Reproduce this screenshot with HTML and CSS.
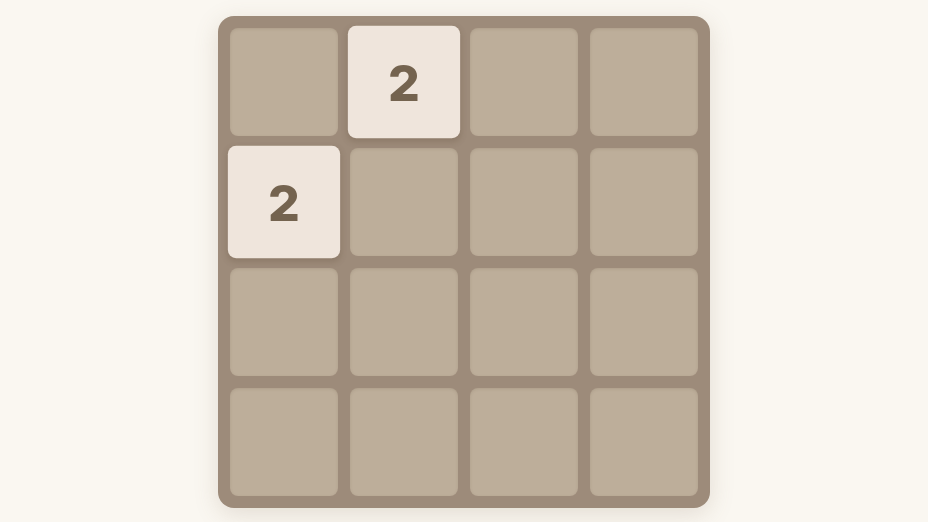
FILE: index.html
```html
<!DOCTYPE html>
<html lang="en">
<head>
    <meta charset="UTF-8">
    <meta name="viewport" content="width=device-width, initial-scale=1.0">
    <title>2048</title>
    <link rel="stylesheet" href="styles.css">
</head>
<body>
    <div id="board">
        <div class="cell"></div>
        <div class="cell tile">2</div>
        <div class="cell"></div>
        <div class="cell"></div>

        <div class="cell tile">2</div>
        <div class="cell"></div>
        <div class="cell"></div>
        <div class="cell"></div>

        <div class="cell"></div>
        <div class="cell"></div>
        <div class="cell"></div>
        <div class="cell"></div>

        <div class="cell"></div>
        <div class="cell"></div>
        <div class="cell"></div>
        <div class="cell"></div>
    </div>
</body>
</html>
```

FILE: styles.css
```css
* {
    margin: 0;
    padding: 0;
    box-sizing: border-box;
}

body {
    width: 928px;
    height: 522px;
    padding-top: 2px;
    background: #faf7f1;
    display: flex;
    align-items: center;
    justify-content: center;
    font-family: Inter, "Liberation Sans", sans-serif;
}

/* 4x4 판 : 108px 칸 + 12px 간격 */
#board {
    width: 492px;
    height: 492px;
    padding: 12px;
    display: grid;
    grid-template-columns: repeat(4, 108px);
    grid-template-rows: repeat(4, 108px);
    gap: 12px;
    background: #9d8b7a;
    border-radius: 16px;
    box-shadow: 0 6px 24px rgba(120, 100, 70, 0.18);
}

.cell {
    background: #bdae9a;
    border-radius: 8px;
    box-shadow: inset 0 1px 3px rgba(90, 70, 50, 0.15);
}

.tile {
    background: #efe5dc;
    color: #74634f;
    font-size: 48px;
    font-weight: 800;
    display: flex;
    align-items: center;
    justify-content: center;
    transform: scale(1.04);
    box-shadow: 0 3px 6px rgba(80, 60, 40, 0.2);
}
```
